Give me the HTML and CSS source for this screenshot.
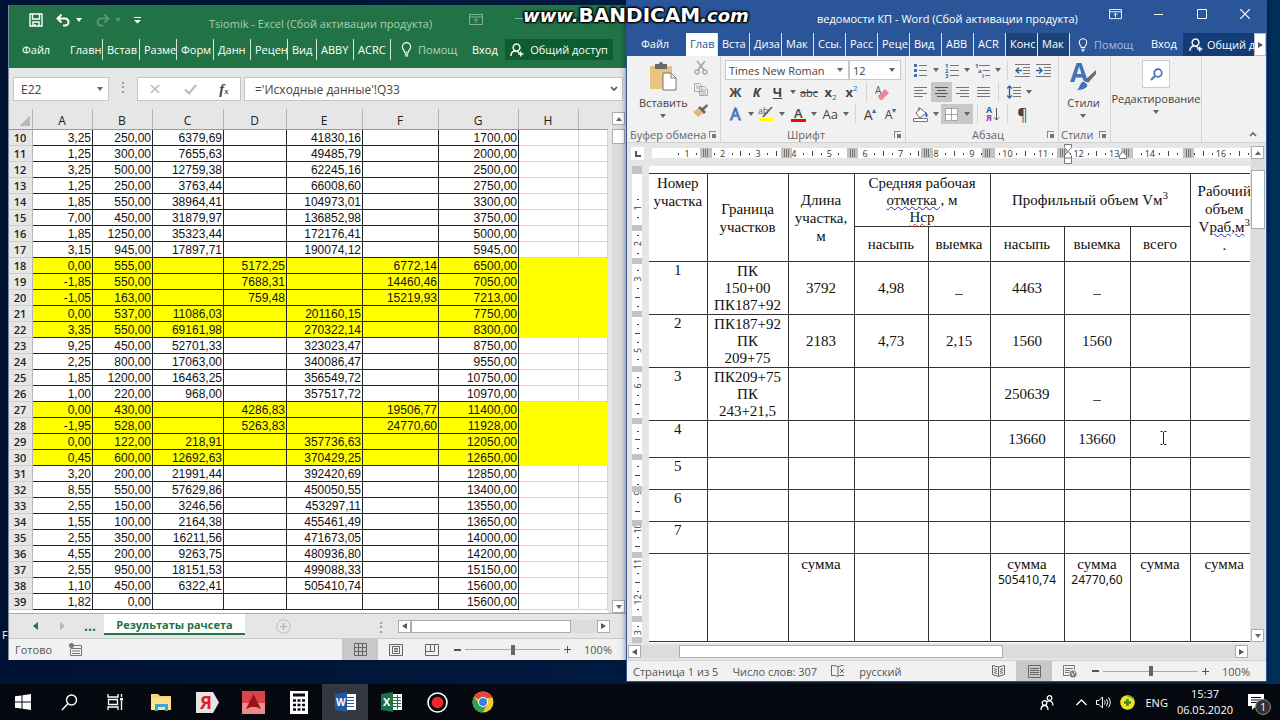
FILE: index.html
```
<!DOCTYPE html>
<html lang="ru">
<head>
  <meta charset="UTF-8" />
  <title>Tsiomik - Excel, ведомости КП - Word</title>
  <meta content="width=device-width, initial-scale=1.0" name="viewport" />
  <link rel="stylesheet" href="styles.css">
</head>
<body>
  <!-- shared icons -->
  <svg class="defs" aria-hidden="true">
    <symbol id="i-ribbon" viewBox="0 0 14 12"><path d="M.5.5h13v10H.5zM.5 3h13M7 9V5M5 6.500l2-2 2 2" fill="none" stroke="currentColor"/></symbol>
    <symbol id="i-bulb" viewBox="0 0 12 16"><path d="M4 11c0-2-2.500-3-2.500-6a4.500 4.500 0 0 1 9 0c0 3-2.500 4-2.500 6zM4 13h4M4.500 15h3" fill="none" stroke="currentColor" stroke-width="1.300"/></symbol>
    <symbol id="i-share" viewBox="0 0 15 15"><path d="M1 14c0-4 2.500-5.500 5-5.500 1.500 0 3 .5 4 2M6.500 8.500a3.700 3.700 0 1 1 1 0M11.500 9v5.500M8.800 11.800h5.500" fill="none" stroke="currentColor" stroke-width="1.500"/></symbol>
  </svg>

  <div class="desktop">
    <span class="desktop-label">F</span>

    <div class="windows">
      <!-- Excel -->
      <section class="excel">
        <div class="x-title">
          <div class="quick">
            <button aria-label="Сохранить"><svg width="14" height="14" viewBox="0 0 14 14"><path d="M1 1h12v12H1zM3.500 1v5h7V1M4 13V9h6v4M6 13v-2" fill="none" stroke="#fff" stroke-width="1.400"/></svg></button>
            <button aria-label="Отменить"><svg width="15" height="13" viewBox="0 0 15 13"><path d="M1.500 4.500h7.500a3.500 3.500 0 0 1 0 7H7M5.500.5l-4 4 4 4" fill="none" stroke="#fff" stroke-width="2"/></svg><i class="caret"></i></button>
            <button class="faded" aria-label="Вернуть"><svg width="15" height="13" viewBox="0 0 15 13"><path d="M13.500 4.500H6a3.500 3.500 0 0 0 0 7h2M9.500.5l4 4-4 4" fill="none" stroke="#fff" stroke-width="2"/></svg><i class="caret"></i></button>
            <button aria-label="Настройка панели"><svg width="7" height="7" viewBox="0 0 7 7"><path d="M0 .5h7" stroke="#fff"/><path d="M0 3h7L3.500 6.500z" fill="#fff"/></svg></button>
          </div>
          <h1>Tsiomik - Excel (Сбой активации продукта)</h1>
          <div class="x-controls"><svg width="14" height="12"><use href="#i-ribbon"/></svg><svg width="9" height="9"><path d="M0 4.500h9" stroke="currentColor"/></svg></div>
        </div>
        <nav class="x-tabs">
          <a href="#" class="file">Файл</a>
          <a href="#">Главн</a><a href="#">Встав</a><a href="#">Разме</a><a href="#">Форм</a><a href="#">Данн</a><a href="#">Рецен</a><a href="#" class="short">Вид</a><a href="#">ABBY</a><a href="#">ACRC</a>
          <a href="#" class="help"><svg width="11" height="15"><use href="#i-bulb"/></svg><span>Помощ</span></a>
          <a href="#" class="login">Вход</a>
          <button class="share"><svg width="14" height="14"><use href="#i-share"/></svg>Общий доступ</button>
        </nav>
        <div class="formula">
          <label class="name-box"><input value="E22" aria-label="Имя"><i class="caret"></i></label>
          <span class="dots">⋮</span>
          <div class="fx">
            <svg width="12" height="12" viewBox="0 0 12 12"><path d="M2 2l8 8M10 2l-8 8" stroke="#b9b9b9" stroke-width="1.500"/></svg>
            <svg width="13" height="12" viewBox="0 0 13 12"><path d="M1 6.500l4 4L12 2" fill="none" stroke="#b9b9b9" stroke-width="2"/></svg>
            <em>f<sub>x</sub></em>
          </div>
          <label class="fbar"><input value="='Исходные данные'!Q33" aria-label="Формула"><svg width="8" height="6" viewBox="0 0 8 6"><path d="M1 1l3 3 3-3" fill="none" stroke="#555" stroke-width="1.700"/></svg></label>
        </div>
        <div class="x-body">
          <div class="x-sheet">
            <table class="grid">
              <colgroup><col class="c-n"><col class="c-a"><col class="c-a"><col class="c-c"><col class="c-d"><col class="c-e"><col class="c-e"><col class="c-g"><col class="c-a"><col></colgroup>
              <thead><tr><th class="corner"></th><th>A</th><th>B</th><th>C</th><th>D</th><th>E</th><th>F</th><th>G</th><th>H</th><th></th></tr></thead>
              <tbody id="rows"></tbody>
            </table>
          </div>
          <div class="vscroll x-vscroll"><button aria-label="Вверх"><i class="up"></i></button><div class="thumb"></div><button class="last" aria-label="Вниз"><i class="caret"></i></button></div>
        </div>
        <div class="x-sheets">
          <button class="prev" aria-label="Назад"></button><button class="next" aria-label="Вперёд"></button><span class="more">...</span>
          <a href="#" class="sheet-tab">Результаты рачсета</a>
          <button class="add" aria-label="Новый лист"><svg width="15" height="15" viewBox="0 0 15 15"><path d="M7.500 4v7M4 7.500h7" stroke="#bbb" stroke-width="1.500"/><circle cx="7.500" cy="7.500" r="6.800" fill="none" stroke="#bbb"/></svg></button>
          <span class="dots">⋮</span>
          <div class="hscroll"><button aria-label="Влево"><i class="left"></i></button><div class="thumb"></div><button class="last" aria-label="Вправо"><i class="right"></i></button></div>
        </div>
        <footer class="status">
          <span>Готово</span>
          <svg class="macro" width="13" height="13" viewBox="0 0 13 13"><path d="M5 2.500h7.500v10h-11V6M2 5.500h10M3 8h8M3 10.500h8" fill="none" stroke="#777"/><circle cx="2.500" cy="2.500" r="2.500" fill="#777"/></svg>
          <div class="views">
            <button class="on" aria-label="Обычный"><svg width="13" height="13" viewBox="0 0 13 13"><path d="M.5.5h12v12H.5zM.5 4.500h12M.5 8.500h12M4.500.5v12M8.500.5v12" fill="none" stroke="#666"/></svg></button>
            <button aria-label="Разметка страницы"><svg width="14" height="12" viewBox="0 0 14 12"><path d="M.5.5h13v11H.5zM3.500 2.500h7v7h-7zM5 4.500h4M5 6h4M5 7.500h4" fill="none" stroke="#666"/></svg></button>
            <button aria-label="Страничный"><svg width="14" height="12" viewBox="0 0 14 12"><path d="M.5.5h13v11H.5zM.5 7.500h9V.5M5.500.5v7" fill="none" stroke="#666"/></svg></button>
          </div>
          <div class="zoom"><span class="minus"></span><input type="range" aria-label="Масштаб"><span class="plus"></span></div>
          <span class="percent">100%</span>
        </footer>
      </section>

      <!-- Word -->
      <section class="word">
        <div class="w-title">
          <h1>ведомости КП - Word (Сбой активации продукта)</h1>
          <div class="w-controls">
            <button aria-label="Лента"><svg width="13" height="11"><use href="#i-ribbon"/></svg></button>
            <button aria-label="Свернуть"><svg width="9" height="9"><path d="M0 4.500h9" stroke="#fff"/></svg></button>
            <button aria-label="Развернуть"><svg width="10" height="10"><path d="M.5.5h9v9h-9z" fill="none" stroke="#fff"/></svg></button>
            <button aria-label="Закрыть"><svg width="10" height="10"><path d="M0 0l10 10M10 0L0 10" stroke="#fff" stroke-width="1.200"/></svg></button>
          </div>
        </div>
        <nav class="w-tabs">
          <a href="#" class="file">Файл</a>
          <a href="#" class="on">Глав</a><a href="#">Вста</a><a href="#">Диза</a><a href="#">Мак</a><a href="#">Ссы.</a><a href="#">Расс</a><a href="#">Реце</a><a href="#">Вид</a><a href="#">ABB</a><a href="#">ACR</a><a href="#" class="ctx">Конс</a><a href="#" class="ctx">Мак</a>
          <a href="#" class="help"><svg width="10" height="14"><use href="#i-bulb"/></svg><span>Помощ</span></a>
          <a href="#" class="login">Вход</a>
          <button class="share"><svg width="14" height="14"><use href="#i-share"/></svg>Общий д</button>
          <button class="scroll-tabs" aria-label="Ещё"><i class="right"></i></button>
        </nav>

        <div class="ribbon">
          <div class="group clipboard">
            <div class="clip-body">
              <button class="big"><svg width="28" height="30" viewBox="0 0 28 30"><path d="M1 4h22v23H1z" fill="#eac282"/><path d="M6 2h4a2 2 0 0 1 4 0h4v5H6z" fill="#6b6b6b"/><path d="M14 11h8l5 5v12H14z" fill="#fff" stroke="#777"/><path d="M22 11v5h5" fill="none" stroke="#777"/></svg>Вставить<i class="caret"></i></button>
              <div class="stack">
                <button aria-label="Вырезать"><svg width="14" height="15" viewBox="0 0 14 15"><path d="M3 1l7 9M11 1L4 10" stroke="#a5a5a5" stroke-width="1.600"/><circle cx="3" cy="12" r="2" fill="none" stroke="#a5a5a5" stroke-width="1.300"/><circle cx="11" cy="12" r="2" fill="none" stroke="#a5a5a5" stroke-width="1.300"/></svg></button>
                <button aria-label="Копировать"><svg width="14" height="13" viewBox="0 0 14 13"><path d="M.5.5h5l2 2v6h-7zM5.500 3.500h5l3 3v6h-8zM7 7h5M7 9h5M7 11h5M2 3h3M2 5h3" fill="#f1f1f1" stroke="#a9a9a9"/></svg></button>
                <button aria-label="Формат по образцу"><svg width="15" height="14" viewBox="0 0 15 14"><path d="M14 0l-5 4-2-2-2 2 6 6 2-2-2-2 4-4z" fill="#666"/><path d="M5 4L0 8l5 5 5-4z" fill="#e6b878"/></svg></button>
              </div>
            </div>
            <div class="caption">Буфер обмена<i class="launch"></i></div>
          </div>
          <div class="group font">
            <div class="row selects">
              <label class="face"><select aria-label="Шрифт"><option>Times New Roman</option></select><i class="caret"></i></label>
              <label class="size"><select aria-label="Размер"><option>12</option></select><i class="caret"></i></label>
            </div>
            <div class="row">
              <button class="tool"><b>Ж</b></button><button class="tool"><b><em>К</em></b></button><button class="tool"><b><u>Ч</u></b></button><button class="drop" aria-label="Подчёркивание"><i class="caret"></i></button>
              <button class="tool wide"><s>abc</s></button><button class="tool"><b>x</b><sub>2</sub></button><button class="tool"><b>x</b><sup>2</sup></button><span class="sep"></span>
              <button class="tool" aria-label="Очистить"><svg width="14" height="15" viewBox="0 0 14 15"><text x="0" y="9" font-size="10" fill="#555">A</text><path d="M3 11l7-7 4 4-7 7H5z" fill="#e88a9c"/></svg></button>
            </div>
            <div class="row">
              <button class="tool glow">A</button><button class="drop" aria-label="Эффекты"><i class="caret"></i></button>
              <button class="tool wide" aria-label="Выделение"><svg width="16" height="16" viewBox="0 0 16 16"><text x="0" y="8" font-size="9" fill="#555">ab</text><path d="M15 1L8 9l-2 2H4l2-3 7-7z" fill="#666"/><path d="M1 12h14v3H1z" fill="#ff0"/></svg></button><button class="drop" aria-label="Цвет выделения"><i class="caret"></i></button>
              <button class="tool wide color">A</button><button class="drop" aria-label="Цвет текста"><i class="caret"></i></button>
              <button class="tool wide aa">Aa</button><button class="drop" aria-label="Регистр"><i class="caret"></i></button><span class="sep"></span>
              <button class="tool grow">A<sup>▴</sup></button><button class="tool shrink">A<sup>▾</sup></button>
            </div>
            <div class="caption">Шрифт<i class="launch"></i></div>
          </div>
          <div class="group para">
            <div class="row">
              <button class="tool" aria-label="Маркеры"><svg width="13" height="15" viewBox="0 0 13 15"><path d="M0 1h3v3H0zM0 6h3v3H0zM0 11h3v3H0z" fill="#4472a8"/><path d="M5 2.500h8M5 7.500h8M5 12.500h8" stroke="#777"/></svg></button><button class="drop" aria-label="Вид маркеров"><i class="caret"></i></button>
              <button class="tool" aria-label="Нумерация"><svg width="14" height="15" viewBox="0 0 14 15"><g font-size="6" font-weight="bold" fill="#2f66a5"><text y="5">1</text><text y="10">2</text><text y="15">3</text></g><path d="M5 2.500h9M5 7.500h9M5 12.500h9" stroke="#777"/></svg></button><button class="drop" aria-label="Вид номеров"><i class="caret"></i></button>
              <button class="tool" aria-label="Многоуровневый"><svg width="15" height="15" viewBox="0 0 15 15"><g font-size="6" font-weight="bold" fill="#2f66a5"><text y="5">1</text><text x="3" y="10">a</text><text x="7" y="15">i</text></g><path d="M4 2.500h11M8 7.500h7M10 12.500h5" stroke="#777"/></svg></button><button class="drop" aria-label="Вид списка"><i class="caret"></i></button><span class="sep"></span>
              <button class="tool" aria-label="Уменьшить отступ"><svg width="15" height="13" viewBox="0 0 15 13"><path d="M0 .5h15M8 3.500h7M8 6.500h7M8 9.500h7M0 12.500h15" stroke="#777"/><path d="M1 6.500h6M4 3.500l-3 3 3 3" fill="none" stroke="#2f66a5" stroke-width="1.500"/></svg></button>
              <button class="tool" aria-label="Увеличить отступ"><svg width="15" height="13" viewBox="0 0 15 13"><path d="M0 .5h15M8 3.500h7M8 6.500h7M8 9.500h7M0 12.500h15" stroke="#777"/><path d="M0 6.500h6M3 3.500l3 3-3 3" fill="none" stroke="#2f66a5" stroke-width="1.500"/></svg></button>
            </div>
            <div class="row">
              <button class="tool" aria-label="По левому краю"><svg width="13" height="11"><path d="M0 .5h13M0 3.500h9M0 6.500h13M0 9.500h9" stroke="#777"/></svg></button>
              <button class="tool on" aria-label="По центру"><svg width="13" height="11"><path d="M0 .5h13M2 3.500h9M0 6.500h13M2 9.500h9" stroke="#555"/></svg></button>
              <button class="tool" aria-label="По правому краю"><svg width="13" height="11"><path d="M0 .5h13M4 3.500h9M0 6.500h13M4 9.500h9" stroke="#777"/></svg></button>
              <button class="tool" aria-label="По ширине"><svg width="13" height="11"><path d="M0 .5h13M0 3.500h13M0 6.500h13M0 9.500h13" stroke="#777"/></svg></button><span class="sep"></span>
              <button class="tool" aria-label="Интервал"><svg width="14" height="14" viewBox="0 0 14 14"><path d="M2.500 1v12M0 3.500L2.500 1 5 3.500M0 10.500L2.500 13 5 10.500" fill="none" stroke="#2f66a5" stroke-width="1.400"/><path d="M6 2.500h8M6 5.500h8M6 8.500h8M6 11.500h8" stroke="#777"/></svg></button><button class="drop" aria-label="Величина интервала"><i class="caret"></i></button>
            </div>
            <div class="row">
              <button class="tool" aria-label="Заливка"><svg width="16" height="16" viewBox="0 0 16 16"><path d="M7 2l6 5-6 5-4-5zM6 5V1" fill="#fff" stroke="#666"/><path d="M13 6c2 2 2 4 1 5-2 0-2-2-1-5z" fill="#2f66a5"/><path d="M.5 12.500h14v3H.5z" fill="#fff" stroke="#777"/></svg></button><button class="drop" aria-label="Цвет заливки"><i class="caret"></i></button>
              <button class="borders on" aria-label="Границы"><svg width="13" height="13"><path d="M0 0h13v13H0z" fill="#fff"/><path d="M.5.5h12v12H.5zM6.500.5v12M.5 6.500h12" fill="none" stroke="#555" stroke-dasharray="1 1"/></svg><i class="caret"></i></button><span class="sep"></span>
              <button class="tool" aria-label="Сортировка"><svg width="14" height="16" viewBox="0 0 14 16"><text y="7" font-size="9" font-weight="bold" fill="#2f66a5">А</text><text y="15" font-size="9" font-weight="bold" fill="#8c3fb0">Я</text><path d="M10.500 2v12M8 11.500l2.500 2.500 2.500-2.500" fill="none" stroke="#555"/></svg></button><span class="sep"></span>
              <button class="tool pil">¶</button>
            </div>
            <div class="caption">Абзац<i class="launch"></i></div>
          </div>
          <div class="group styles">
            <button class="big"><svg width="27" height="30" viewBox="0 0 27 30"><text x="0" y="20" font-size="26" font-weight="bold" fill="#3f73b3">A</text><path d="M26 8v4l-8 9-3-3z" fill="#6b6b6b"/><path d="M14 19l4 4c-1 4-6 6-12 5 4-2 3-8 8-9z" fill="#3f73b3" stroke="#f1f1f1"/></svg>Стили<i class="caret"></i></button>
            <div class="caption">Стили<i class="launch"></i></div>
          </div>
          <div class="group editing">
            <button class="big"><span class="lens"><svg width="13" height="13" viewBox="0 0 13 13"><circle cx="8" cy="5" r="3.800" fill="none" stroke="#3f73b3" stroke-width="1.700"/><path d="M5 8l-4 4" stroke="#3f73b3" stroke-width="2"/></svg></span>Редактирование<i class="caret"></i></button>
          </div>
          <button class="collapse" aria-label="Свернуть ленту"><svg width="8" height="6" viewBox="0 0 8 6"><path d="M1 5l3-3 3 3" fill="none" stroke="#666" stroke-width="1.700"/></svg></button>
        </div>

        <div class="w-body">
          <div class="w-page">
            <div class="corner-tab"><svg width="6" height="6"><path d="M1 0v5h5" fill="none" stroke="#555" stroke-width="2"/></svg></div>
            <svg class="h-ruler" id="hRuler"></svg>
            <svg class="v-ruler" id="vRuler"></svg>
            <div class="paper">
              <table class="sheet">
                <colgroup><col class="w1"><col class="w2"><col class="w3"><col class="w4"><col class="w5"><col class="w4"><col class="w3"><col class="w8"><col class="w9"></colgroup>
                <thead>
                  <tr class="h-a">
                    <th rowspan="2" class="top">Номер участка</th><th rowspan="2">Граница участков</th><th rowspan="2">Длина участка, м</th>
                    <th colspan="2" class="tight">Средняя рабочая <span class="blue">отметка ,</span> м <br><span class="red">Hср</span></th>
                    <th colspan="3">Профильный объем Vм<sup>3</sup></th>
                    <th rowspan="2">Рабочий объем V<span class="blue">раб,м</span><sup>3</sup><br>.</th>
                  </tr>
                  <tr class="h-b"><th>насыпь</th><th>выемка</th><th>насыпь</th><th>выемка</th><th>всего</th></tr>
                </thead>
                <tbody>
                  <tr class="tall"><td class="top">1</td><td>ПК<br>150+00 ПК187+92</td><td>3792</td><td>4,98</td><td>_</td><td>4463</td><td>_</td><td></td><td></td></tr>
                  <tr class="tall"><td class="top">2</td><td>ПК187+92 ПК<br>209+75</td><td>2183</td><td>4,73</td><td>2,15</td><td>1560</td><td>1560</td><td></td><td></td></tr>
                  <tr class="tall"><td class="top">3</td><td>ПК209+75 ПК<br>243+21,5</td><td></td><td></td><td></td><td>250639</td><td>_</td><td></td><td></td></tr>
                  <tr class="mid"><td class="top">4</td><td></td><td></td><td></td><td></td><td>13660</td><td>13660</td><td></td><td></td></tr>
                  <tr class="low"><td class="top">5</td><td></td><td></td><td></td><td></td><td></td><td></td><td></td><td></td></tr>
                  <tr class="low"><td class="top">6</td><td></td><td></td><td></td><td></td><td></td><td></td><td></td><td></td></tr>
                  <tr class="low"><td class="top">7</td><td></td><td></td><td></td><td></td><td></td><td></td><td></td><td></td></tr>
                  <tr class="sum"><td></td><td></td><td>сумма</td><td></td><td></td><td>сумма<small>505410,74</small></td><td>сумма<small>24770,60</small></td><td>сумма</td><td>сумма</td></tr>
                </tbody>
              </table>
              <svg class="ibeam" width="7" height="14" viewBox="0 0 7 14"><path d="M.5.5h2l1 1 1-1h2M3.500 1v12M.5 13.500h2l1-1 1 1h2" fill="none" stroke="#222"/></svg>
            </div>
          </div>
          <div class="vscroll w-vscroll"><button aria-label="Вверх"><i class="up"></i></button><div class="thumb"></div><button class="last" aria-label="Вниз"><i class="caret"></i></button></div>
        </div>
        <div class="hscroll w-hscroll"><button aria-label="Влево"><i class="left"></i></button><div class="thumb"></div><button class="last" aria-label="Вправо"><i class="right"></i></button></div>
        <footer class="status">
          <span>Страница 1 из 5</span><span>Число слов: 307</span>
          <svg width="14" height="12" viewBox="0 0 14 12"><path d="M7 2C5 .5 3 .5 .5 .5v10c2.500 0 4.500 0 6.500 1zM7 2c1-1 3-1.500 5.500-1.500M8 10.500h5M9 4l4 4M13 4L9 8" fill="none" stroke="#666"/></svg>
          <span>русский</span>
          <div class="views">
            <button aria-label="Чтение"><svg width="13" height="12" viewBox="0 0 13 12"><path d="M6.500 2L.5.5v9l6 2 6-2v-9zM6.500 2v9M2 3.500l3 1M2 5.500l3 1M2 7.500l3 1M11 3.500l-3 1M11 5.500l-3 1M11 7.500l-3 1" fill="none" stroke="#666"/></svg></button>
            <button class="on" aria-label="Разметка"><svg width="13" height="13"><path d="M.5.5h12v12H.5zM2 3.500h9M2 5.500h9M2 7.500h9M2 9.500h9" fill="none" stroke="#666"/></svg></button>
            <button aria-label="Веб-документ"><svg width="14" height="13" viewBox="0 0 14 13"><path d="M6 10.500H.5V.5h11v4M2 3.500h8M2 5.500h5M2 7.500h4" fill="none" stroke="#777"/><circle cx="10" cy="9" r="3.500" fill="#777"/><path d="M8 8l2 1v2M11 6.500l1 2" stroke="#fff" fill="none"/></svg></button>
          </div>
          <div class="zoom"><span class="minus"></span><input type="range" aria-label="Масштаб"><span class="plus"></span></div>
          <span class="percent">100%</span>
        </footer>
      </section>
    </div>

    <div class="watermark">www.<b>BANDICAM</b>.com</div>

    <div class="taskbar">
      <button aria-label="Пуск"><svg width="16" height="16" viewBox="0 0 16 16"><path d="M0 2.300l6.500-.9v6.100H0zM7.500 1.200L16 0v7.500H7.500zM0 8.500h6.500v6.100L0 13.700zM7.500 8.500H16V16l-8.500-1.200z" fill="#fff"/></svg></button>
      <button aria-label="Поиск"><svg width="17" height="17" viewBox="0 0 17 17"><circle cx="10.500" cy="6" r="5" fill="none" stroke="#fff" stroke-width="1.400"/><path d="M7 9.500L1 16" stroke="#fff" stroke-width="1.400"/></svg></button>
      <button aria-label="Задачи"><svg width="17" height="16" viewBox="0 0 17 16"><path d="M1 0v3h10V0M1 16v-3h10v3M1.500 5.500h9v5h-9zM14.500 0v3M14.500 7v9" fill="none" stroke="#fff" stroke-width="1.300"/><path d="M13 4h3v2.500h-3z" fill="#fff"/></svg></button>
      <button aria-label="Проводник"><svg width="21" height="18" viewBox="0 0 21 18"><path d="M0 1h7l2 2h11v14H0z" fill="#f7d774"/><path d="M0 5h20v12H0z" fill="#ffe08c"/><path d="M4 18v-7h13v7h-3v-4H7v4z" fill="#3aa5d9"/></svg></button>
      <button aria-label="Яндекс"><svg width="23" height="23" viewBox="0 0 23 23"><path d="M0 1h17l6 10.500L17 22H0z" fill="#e4e4e6"/><text x="4" y="18" font-size="18" font-weight="bold" fill="#e02020">Я</text></svg></button>
      <button aria-label="AutoCAD"><svg width="23" height="23" viewBox="0 0 23 23"><path d="M0 0h23v23H0z" fill="#d9434b"/><path d="M0 12h23v11H0z" fill="#ee8a8c"/><path d="M11.500 3L19 18l-5-2h-5l-5 2z" fill="#9c1018"/></svg></button>
      <button aria-label="Калькулятор"><svg width="18" height="23" viewBox="0 0 18 23"><path d="M0 0h18v23H0z" fill="#fff"/><path d="M3 2.500h12v3H3z" fill="#0a0d14"/><path d="M3 9.500h12M3 14h12M3 18.500h12" stroke="#0a0d14" stroke-width="2.500" stroke-dasharray="3 1.500"/></svg></button>
      <button class="on" aria-label="Word"><svg width="21" height="20" viewBox="0 0 21 20"><path d="M10 2h11v16H10z" fill="#fff"/><path d="M12 5.500h7M12 8.500h7M12 11.500h7M12 14.500h7" stroke="#2a5ca8"/><path d="M0 2l12-2v20L0 18z" fill="#2456a6"/><text x="1" y="14" font-size="10" font-weight="bold" fill="#fff">W</text></svg></button>
      <button aria-label="Excel"><svg width="21" height="20" viewBox="0 0 21 20"><path d="M10 2h11v16H10z" fill="#fff"/><path d="M12 5.500h8M12 8.500h8M12 11.500h8M12 14.500h8M16.500 3v14" stroke="#1e7145"/><path d="M0 2l12-2v20L0 18z" fill="#1e7145"/><text x="2" y="14" font-size="11" font-weight="bold" fill="#fff">X</text></svg></button>
      <button aria-label="Запись"><svg width="21" height="21" viewBox="0 0 21 21"><circle cx="10.500" cy="10.500" r="9.500" fill="#0a0a0a" stroke="#fff" stroke-width="1.600"/><circle cx="10.500" cy="10.500" r="5.800" fill="#f0282c"/></svg></button>
      <button aria-label="Chrome"><svg width="22" height="22" viewBox="0 0 22 22"><circle cx="11" cy="11" r="10.500" fill="#f4c72e"/><path d="M11 11L1.900 5.700A10.500 10.500 0 0 1 20.100 5.700L20.500 7H11z" fill="#dc4a3e"/><path d="M1.900 5.700A10.500 10.500 0 0 0 10.500 21.500L15 13.500 7.500 13z" fill="#2fa153"/><circle cx="11" cy="11" r="5" fill="#fff"/><circle cx="11" cy="11" r="4" fill="#3c7de8"/></svg></button>
      <div class="tray">
        <svg width="14" height="15" viewBox="0 0 14 15"><g fill="none" stroke="#fff" stroke-width="1.300"><circle cx="9.500" cy="3" r="2.300"/><circle cx="4.500" cy="8" r="2.300"/><path d="M1 15c0-3 1.500-4.500 3.500-4.500S8 12 8 15M7 6.500c3-1.500 6 0 6 4"/></g></svg>
        <svg class="chev" width="11" height="7" viewBox="0 0 11 7"><path d="M.5 6l5-5 5 5" fill="none" stroke="#fff" stroke-width="1.300"/></svg>
        <svg width="15" height="13" viewBox="0 0 15 13"><path d="M.5 4.500H3l3.500-3.500v11L3 8.500H.5zM8.500 4.500q1.500 2 0 4M10.500 3q2.500 3.500 0 7M12.500 1.500q3.500 5 0 10" fill="none" stroke="#fff"/></svg>
        <svg width="15" height="15" viewBox="0 0 15 15"><circle cx="7.500" cy="7.500" r="7.300" fill="#f2e02e"/><path d="M5 0.500a7.300 7.300 0 0 1 9.500 5L11 3z" fill="#5db53a"/><path d="M7.500 4v7M4 7.500h7" stroke="#3c8c22" stroke-width="2.600"/></svg>
        <span class="lang">ENG</span>
        <div class="clock"><time>15:37</time><time>06.05.2020</time></div>
        <div class="notes"><svg width="16" height="16" viewBox="0 0 16 16"><path d="M0 0h16v12H8l-4 4v-4H0z" fill="#fff"/><path d="M3 3.500h10M3 6h10M3 8.500h7" stroke="#0a0d14"/></svg><span class="badge">1</span></div>
      </div>
    </div>
  </div>

  <script>
    // row number, A..G
    const ROWS = [
      [10, "3,25", "250,00", "6379,69", "", "41830,16", "", "1700,00"],
      [11, "1,25", "300,00", "7655,63", "", "49485,79", "", "2000,00"],
      [12, "3,25", "500,00", "12759,38", "", "62245,16", "", "2500,00"],
      [13, "1,25", "250,00", "3763,44", "", "66008,60", "", "2750,00"],
      [14, "1,85", "550,00", "38964,41", "", "104973,01", "", "3300,00"],
      [15, "7,00", "450,00", "31879,97", "", "136852,98", "", "3750,00"],
      [16, "1,85", "1250,00", "35323,44", "", "172176,41", "", "5000,00"],
      [17, "3,15", "945,00", "17897,71", "", "190074,12", "", "5945,00"],
      [18, "0,00", "555,00", "", "5172,25", "", "6772,14", "6500,00"],
      [19, "-1,85", "550,00", "", "7688,31", "", "14460,46", "7050,00"],
      [20, "-1,05", "163,00", "", "759,48", "", "15219,93", "7213,00"],
      [21, "0,00", "537,00", "11086,03", "", "201160,15", "", "7750,00"],
      [22, "3,35", "550,00", "69161,98", "", "270322,14", "", "8300,00"],
      [23, "9,25", "450,00", "52701,33", "", "323023,47", "", "8750,00"],
      [24, "2,25", "800,00", "17063,00", "", "340086,47", "", "9550,00"],
      [25, "1,85", "1200,00", "16463,25", "", "356549,72", "", "10750,00"],
      [26, "1,00", "220,00", "968,00", "", "357517,72", "", "10970,00"],
      [27, "0,00", "430,00", "", "4286,83", "", "19506,77", "11400,00"],
      [28, "-1,95", "528,00", "", "5263,83", "", "24770,60", "11928,00"],
      [29, "0,00", "122,00", "218,91", "", "357736,63", "", "12050,00"],
      [30, "0,45", "600,00", "12692,63", "", "370429,25", "", "12650,00"],
      [31, "3,20", "200,00", "21991,44", "", "392420,69", "", "12850,00"],
      [32, "8,55", "550,00", "57629,86", "", "450050,55", "", "13400,00"],
      [33, "2,55", "150,00", "3246,56", "", "453297,11", "", "13550,00"],
      [34, "1,55", "100,00", "2164,38", "", "455461,49", "", "13650,00"],
      [35, "2,55", "350,00", "16211,56", "", "471673,05", "", "14000,00"],
      [36, "4,55", "200,00", "9263,75", "", "480936,80", "", "14200,00"],
      [37, "2,55", "950,00", "18151,53", "", "499088,33", "", "15150,00"],
      [38, "1,10", "450,00", "6322,41", "", "505410,74", "", "15600,00"],
      [39, "1,82", "0,00", "", "", "", "", "15600,00"]
    ];

    const isYellow = n => (n >= 18 && n <= 22) || (n >= 27 && n <= 30);

    document.getElementById("rows").innerHTML = ROWS.map(([n, ...cells]) => `
      <tr class="${isYellow(n) ? "yellow" : ""}">
        <th>${n}</th>
        ${cells.map(c => `<td>${c}</td>`).join("")}
        <td class="out"></td><td class="out"></td>
      </tr>`).join("");

    // ruler: numbers every centimetre, ticks at the half, dots at the quarters
    const CM = 35.6;

    function drawRuler(id, start, length, blocks, vertical) {
      const at = (x, y) => vertical ? [y, x] : [x, y];
      const rect = (pos, len, cross, size, fill) => {
        const [x, y] = at(pos, cross);
        const [w, h] = at(len, size);
        return `<rect x="${x}" y="${y}" width="${w}" height="${h}" fill="${fill}"/>`;
      };
      const covered = p => blocks.some(([pos, len]) => p > pos && p < pos + len);
      let out = rect(vertical ? 0 : 3, length, 0, 10, "#fff");
      for (let i = 1; i <= 17; i++) {
        const p = start + (i - 1) * CM;
        const [x, y] = at(p, 5);
        const turn = vertical ? ` transform="rotate(-90 ${x} ${y})"` : "";
        if (!covered(p)) {
          out += `<text x="${x}" y="${y + 4}"${turn}>${i}</text>`;
        }
        [-0.25, 0.25].forEach(q => out += rect(Math.round(p + q * CM), 1, 5, 2, "#444"));
        out += rect(Math.round(p + CM / 2), 1, 3, 5, "#444");
      }
      blocks.forEach(([pos, len]) => {
        out += rect(pos, len, 0, 10, "#c3c3c3");
        if (!vertical) {
          [3, 5, 7].forEach(d => out += rect(pos + d, 1, 1, 8, "#777"));
        }
      });
      document.getElementById(id).innerHTML = out;
      if (!vertical) {
        // indent markers
        document.getElementById(id).innerHTML += `<path d="M415.500-3.500h7v3l-3.500 4-3.500-4zM419 3.500l3.500 4v8h-7v-8zM415.500 10h7M470.500 10.500v-3l3.500-4 3.500 4v3z" fill="#fff" stroke="#777"/>`;
      }
    }

    drawRuler("hRuler", 38, 600, [[51, 12], [132, 11], [198, 11], [272, 12], [333, 13], [408, 10], [472, 12], [534, 11]], false);
    drawRuler("vRuler", 42, 480, [[0, 8], [59, 6], [92, 6], [145, 6], [200, 6], [252, 6], [288, 6], [320, 6], [354, 6], [386, 6], [450, 6], [471, 6]], true);
  </script>
</body>
</html>
```

FILE: styles.css
```
* { box-sizing: border-box; }
body { margin: 0; font-family: "Open Sans", "Noto Sans", sans-serif; font-size: 11px; color: #333; }
h1 { margin: 0; font-size: 11px; font-weight: normal; }
a { color: inherit; text-decoration: none; }
button, input, select { font: inherit; color: inherit; border: none; background: none; padding: 0; margin: 0; outline: none; }
button { display: flex; align-items: center; justify-content: center; cursor: pointer; }
svg { display: block; flex: none; }
.defs { position: absolute; width: 0; height: 0; }

.desktop {
  position: relative;
  display: flex;
  flex-direction: column;
  height: 100vh;
  overflow: hidden;
  background: linear-gradient(90deg, #001233, #001a3f 50%, #00305c);
}
.desktop-label { position: absolute; left: 2px; bottom: 78px; color: #fff; }

.windows {
  flex: 1;
  min-height: 0;
  display: grid;
  grid-template-columns: 618fr 641fr;
  grid-template-rows: minmax(0, 1fr);
  padding: 0 13px 2px 8px;
}

/* little arrows */
.caret, .up, .left, .right { display: block; flex: none; width: 0; height: 0; border: 3px solid transparent; }
.caret { border-top: 4px solid #666; border-bottom: none; }
.up { border-bottom: 4px solid #666; border-top: none; }
.left { border-right: 5px solid #555; border-left: none; }
.right { border-left: 5px solid #555; border-right: none; }

/* excel */
.excel { display: flex; flex-direction: column; min-width: 0; margin: 5px 0 22px; background: #e6e6e6; border-left: 1px solid #7d8b9c; }
.x-title { display: flex; height: 30px; background: #217346; color: #a6cdb6; align-items: center; }
.x-title h1 { margin-left: 68px; white-space: nowrap; padding-top: 6px; }
.quick { display: flex; align-items: center; gap: 13px; padding-left: 20px; }
.quick button { gap: 5px; }
.quick .caret { border-top-color: #fff; }
.quick .faded { opacity: .25; }
.x-controls { display: flex; gap: 32px; margin-left: auto; padding-right: 102px; color: #7fb395; }

.x-tabs { display: flex; height: 33px; padding: 4px 13px 8px; background: #217346; color: #fff; }
.x-tabs a { display: block; flex: none; width: 37px; overflow: hidden; padding-left: 4px; line-height: 21px; white-space: nowrap; border-right: 1px solid #d5e6dc; }
.x-tabs .file { width: 44px; padding: 0; border: none; }
.x-tabs .short { width: 29px; }
.x-tabs .help, .w-tabs .help { display: flex; align-items: center; gap: 6px; width: 71px; padding: 0 0 0 10px; border: none; color: #b4d3c1; }
.help svg { color: #fff; }
.x-tabs .login { width: 43px; padding: 0 0 0 10px; border: none; }
.x-tabs .share { flex: none; width: 108px; gap: 6px; margin-left: auto; background: #0e5c2f; white-space: nowrap; }

.formula { display: flex; height: 41px; padding: 9px 3px 8px 4px; font-size: 12px; color: #444; }
.formula label, .fx { display: flex; align-items: center; background: #fff; border: 1px solid #c6c6c6; }
.formula input { flex: 1; min-width: 0; padding-left: 7px; }
.name-box { width: 96px; padding-right: 5px; }
.dots { width: 28px; text-align: center; font-size: 14px; color: #888; }
.fx { width: 104px; justify-content: space-around; font-family: "Liberation Serif", serif; font-size: 15px; font-weight: bold; }
.fx sub { font-size: 9px; vertical-align: baseline; }
.fbar { flex: 1; margin-left: 3px; padding-right: 4px; }
.formula .fbar input { padding-left: 10px; }

.x-body { flex: 1; min-height: 0; display: flex; gap: 4px; padding-right: 1px; }
.x-sheet { flex: 1; min-width: 0; overflow: hidden; background: #fff; }
.grid { width: 100%; table-layout: fixed; border-collapse: separate; border-spacing: 0; }
.c-n { width: 24px; }
.c-a { width: 60px; }
.c-c { width: 71px; }
.c-d { width: 63px; }
.c-e { width: 76px; }
.c-g { width: 80px; }
.grid th, .grid td { height: 16px; padding: 1px 1px 0 0; line-height: 14px; overflow: hidden; }
.grid th { background: #e6e6e6; border-right: 1px solid #b5b5b5; border-bottom: 1px solid #cfcfcf; font-weight: normal; color: #222; }
.grid thead th { height: 21px; padding-top: 4px; font-size: 12px; line-height: 16px; border-bottom-color: #999; }
.grid thead th:last-child { border-right: none; }
.grid .corner { background: linear-gradient(135deg, transparent 50%, #b7b7b7 50%) 10px 6px / 11px 11px no-repeat #e6e6e6; }
.grid tbody th { font-weight: 600; }
.grid td { font-family: "Liberation Sans", Arial, sans-serif; font-size: 12px; color: #111; text-align: right; border-right: 1px solid #222; border-bottom: 1px solid #222; }
.grid .yellow td { background: #ff0; }
.grid .out { border-color: #d4d4d4; }
.grid .yellow .out { border-color: #ff0; }

/* scrollbars */
.vscroll { display: flex; flex-direction: column; width: 13px; background: #dcdcdc; }
.vscroll button, .hscroll button { flex: none; width: 13px; height: 13px; background: #fff; border: 1px solid #ababab; }
.vscroll .last { margin-top: auto; }
.hscroll .last { margin-left: auto; }
.hscroll { display: flex; background: #dcdcdc; }
.thumb { background: #fff; border: 1px solid #ababab; }
.x-vscroll { margin-top: 3px; }
.x-vscroll .thumb { height: 15px; margin-top: 4px; }

.x-sheets { display: flex; align-items: center; height: 26px; padding: 0 16px 0 24px; border-top: 1px solid #ababab; border-bottom: 1px solid #c9c9c9; }
.prev, .next { width: 5px; height: 8px; border: 4px solid transparent; border-left: none; border-right: 5px solid #217346; }
.next { margin-left: 22px; border-right: none; border-left: 5px solid #b5b5b5; }
.more { margin: 0 8px 0 19px; color: #217346; font-size: 14px; line-height: 16px; font-weight: bold; }
.sheet-tab { align-self: stretch; width: 141px; line-height: 22px; text-align: center; font-weight: bold; color: #217346; background: #fff; border-bottom: 2px solid #217346; white-space: nowrap; margin-bottom: 3px; }
.add { margin-left: 31px; }
.x-sheets .dots { margin-left: auto; }
.x-sheets .hscroll { width: 212px; margin-left: 3px; }
.x-sheets .thumb { width: 160px; }

.status { display: flex; flex: none; align-items: center; height: 21px; background: #f1f1f1; color: #555; white-space: nowrap; }
.status span { flex: none; }
.excel .status { padding: 0 14px 0 6px; }
.macro { margin-left: 17px; }
.views { display: flex; align-self: stretch; margin-left: auto; }
.views button { width: 36px; }
.views .on { background: #c8c8c8; }
.zoom { display: flex; align-items: center; gap: 4px; margin-left: 4px; }
.zoom input { -webkit-appearance: none; appearance: none; width: 95px; height: 10px; background: linear-gradient(#aaa, #aaa) center / 100% 1px no-repeat; }
.zoom input::-webkit-slider-thumb { -webkit-appearance: none; width: 4px; height: 10px; background: #666; }
.minus, .plus { width: 7px; height: 7px; background: linear-gradient(#555, #555) center / 7px 2px no-repeat; }
.plus { background: linear-gradient(#555, #555) center / 7px 1px no-repeat, linear-gradient(#555, #555) center / 1px 7px no-repeat; }
.percent { margin-left: 13px; }

/* word */
.word { position: relative; display: flex; flex-direction: column; min-width: 0; background: #e6e6e6; border: 1px solid #2a5699; border-top: none; box-shadow: 0 0 6px rgba(0, 0, 0, .5); }
.w-title { display: flex; flex: none; align-items: center; height: 33px; background: #2a5699; color: #fff; }
.w-title h1 { margin-left: 190px; padding-top: 3px; white-space: nowrap; }
.w-controls { display: flex; align-self: flex-start; margin-left: auto; }
.w-controls button { width: 43px; height: 28px; }

.w-tabs { display: flex; flex: none; height: 23px; background: #2a5699; color: #fff; }
.w-tabs a { flex: none; width: 32px; overflow: hidden; padding-left: 4px; line-height: 22px; white-space: nowrap; border-right: 1px solid #dfe6f1; }
.w-tabs .file { width: 59px; padding: 0 0 0 14px; border: none; }
.w-tabs .on { background: #fff; color: #2a5699; }
.w-tabs .ctx { background: #1e4378; }
.w-tabs .help { width: 71px; padding-left: 8px; color: #a6bde0; }
.w-tabs .login { width: 42px; padding: 0 0 0 10px; border: none; }
.w-tabs .share { flex: 1; min-width: 0; justify-content: flex-start; gap: 4px; padding-left: 6px; margin-left: auto; overflow: hidden; background: #133b75; white-space: nowrap; }
.scroll-tabs { flex: none; width: 12px; background: #fff; border: 1px solid #bbb; }

.ribbon { display: flex; flex: none; height: 87px; background: #f1f1f1; border-bottom: 1px solid #d2d2d2; color: #444; }
.group { display: flex; flex: none; flex-direction: column; padding: 3px 4px 0; border-right: 1px solid #d4d4d4; }
.caption { display: flex; align-items: center; justify-content: center; margin-top: auto; height: 16px; color: #666; white-space: nowrap; }
.launch { width: 7px; height: 7px; margin-left: auto; border: 1px solid #888; border-right: none; border-bottom: none; background: linear-gradient(#777, #777) 100% 100% / 4px 4px no-repeat; }
.clipboard { width: 94px; padding-left: 3px; }
.font { width: 185px; }
.para { width: 153px; }
.styles { width: 52px; padding-left: 2px; }
.editing { width: 91px; padding: 3px 0; }
.font .caption, .para .caption { padding-left: 62px; }
.clip-body { display: flex; justify-content: space-between; }
.stack { display: flex; flex-direction: column; gap: 8px; padding: 1px 8px 0 0; }
.big { flex-direction: column; gap: 4px; margin: 3px auto 0; line-height: 14px; white-space: nowrap; }
.clipboard .big { margin: 3px 0 0 9px; }
.lens { display: flex; align-items: center; justify-content: center; width: 28px; height: 28px; margin-top: -2px; background: #fff; border: 1px solid #ccc; }
.row { display: flex; align-items: center; height: 22px; }
.selects label { display: flex; align-items: center; height: 20px; padding: 0 5px 0 3px; background: #fff; border: 1px solid #c6c6c6; }
.selects select { flex: 1; min-width: 0; appearance: none; }
.face { width: 124px; }
.size { width: 52px; }
.tool { width: 21px; height: 20px; font-size: 13px; }
.tool.wide { width: 22px; }
.tool sub, .tool sup { font-size: 8px; color: #2f66a5; }
.tool sub { align-self: flex-end; }
.tool sup { align-self: flex-start; }
.tool s { font-size: 11px; }
.tool.on, .borders.on { background: #c8c8c8; }
.tool b { line-height: 16px; }
.drop { width: 10px; height: 20px; }
.sep { width: 1px; height: 20px; margin: 0 4px; background: #d4d4d4; }
.glow { font-size: 16px; color: #f1f1f1; -webkit-text-stroke: 1px #3f73b3; }
.row .color { width: 15px; height: 16px; margin: 0 4px; border-bottom: 3px solid #f00; font-weight: 600; }
.grow { font-size: 14px; }
.shrink { font-size: 12px; }
.borders { width: 32px; height: 20px; gap: 6px; }
.pil { font-size: 16px; }
.collapse { margin: auto 9px 5px auto; }

.w-body { flex: 1; min-height: 0; display: flex; padding-right: 1px; }
.w-page { flex: 1; min-width: 0; display: grid; grid-template-columns: 22px minmax(0, 1fr); grid-template-rows: 23px minmax(0, 1fr); }
.corner-tab { display: flex; align-items: center; justify-content: center; width: 13px; height: 13px; margin: 4px 0 0 4px; background: #fff; }
.h-ruler { width: 100%; height: 18px; margin-top: 5px; overflow: visible; clip-path: inset(-5px 0 0 0); }
.v-ruler { width: 10px; height: 100%; margin-left: 5px; overflow: hidden; }
.h-ruler text, .v-ruler text { font-size: 9px; fill: #333; text-anchor: middle; }
.paper { position: relative; overflow: hidden; background: #fff; padding-top: 7px; }
.w-vscroll { width: 14px; margin: 3px 0 1px 1px; }
.w-vscroll .thumb { height: 59px; margin-top: 11px; }

.sheet { width: 610px; table-layout: fixed; border-collapse: collapse; font-family: "Liberation Serif", "Times New Roman", serif; font-size: 15px; line-height: 17px; color: #111; text-align: center; }
.sheet th, .sheet td { padding: 0; font-weight: normal; border: 1px solid #333; }
.sheet tr > :first-child[rowspan], .sheet tbody td:first-child { border-left: none; }
.w1 { width: 58px; }
.w2 { width: 81px; }
.w3 { width: 66px; }
.w4 { width: 74px; }
.w5 { width: 62px; }
.w8 { width: 60px; }
.sheet thead { line-height: 18px; }
.sheet .tight { line-height: 17px; }
.sheet .top, .sum td { vertical-align: top; }
.sheet sup { font-size: 11px; line-height: 0; }
.h-a { height: 53px; }
.h-b { height: 35px; }
.tall { height: 53px; }
.mid { height: 37px; }
.low { height: 32px; }
.sum { height: 88px; }
.sheet .sum td { padding-top: 2px; }
.sum small { display: block; font: 12px/13px "Noto Sans", sans-serif; }
.blue { text-decoration: underline wavy #22c 1px; }
.red { text-decoration: underline wavy #c22 1px; }
.ibeam { position: absolute; left: 511px; top: 265px; }

.w-hscroll { flex: none; height: 13px; margin: 2px 18px 2px 1px; }
.w-hscroll .thumb { width: 324px; margin-left: 38px; }
.word .status { padding: 0 16px 0 6px; border-top: 1px solid #d2d2d2; }
.word .status > span + span { margin-left: 14px; }
.word .status > svg { margin: 0 14px; }
.word .status > svg + span { margin-left: 0; }
.word .status .percent { margin-left: 13px; }

.watermark { position: absolute; left: 523px; top: 4px; color: #fff; font: italic bold 18px/22px "DejaVu Sans", sans-serif; text-shadow: 1px 1px 2px #000, -1px -1px 2px #000, 1px -1px 2px #000, -1px 1px 2px #000; }
.watermark b { font-style: normal; font-size: 20px; }

/* taskbar */
.taskbar { display: flex; flex: none; height: 36px; background: #05080f; color: #fff; }
.taskbar button { width: 46px; }
.taskbar .on { background: #33373f; }
.tray { display: flex; align-items: center; margin-left: auto; gap: 15px; padding-right: 16px; }
.tray svg + svg { margin-left: -6px; }
.tray .chev { margin-left: 7px; }
.lang { margin-left: -5px; }
.clock { display: flex; flex-direction: column; align-items: center; margin-left: -6px; line-height: 16px; }
.notes { position: relative; }
.badge { position: absolute; left: 7px; top: 5px; width: 16px; height: 16px; border-radius: 50%; background: #333; border: 1px solid #888; font-size: 10px; line-height: 14px; text-align: center; }
```
